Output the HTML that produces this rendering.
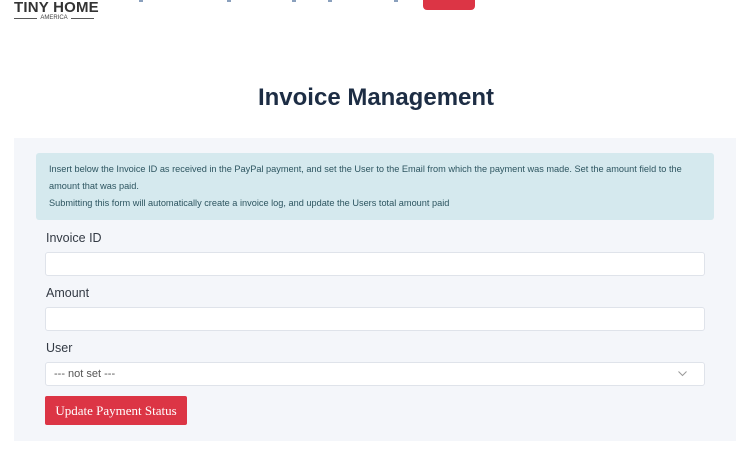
<!DOCTYPE html>
<html><head><style>
*{margin:0;padding:0;box-sizing:border-box}
body{width:752px;height:451px;background:#fff;font-family:"Liberation Sans",sans-serif;position:relative;overflow:hidden}
.a{position:absolute}
.lbl{position:absolute;left:46px;font-size:12.5px;color:#333a44}
.inp{position:absolute;left:45px;width:660px;height:24px;background:#fff;border:1px solid #dfe3ea;border-radius:3px}
</style></head><body>
<div class="a" style="left:14px;top:0;font-size:15px;font-weight:bold;color:#333;line-height:16px;letter-spacing:0.2px">TINY HOME</div>
<div class="a" style="left:14px;top:18px;width:80px;height:1px;background:#555"></div>
<div class="a" style="left:37px;top:14px;width:34px;height:8px;background:#fff;font-size:6px;color:#444;text-align:center;line-height:8px">AMERICA</div>
<div class="a" style="left:139px;top:0;width:4px;height:2px;background:#8aa0bd"></div>
<div class="a" style="left:227px;top:0;width:4px;height:2px;background:#8aa0bd"></div>
<div class="a" style="left:292px;top:0;width:4px;height:2px;background:#8aa0bd"></div>
<div class="a" style="left:328px;top:0;width:4px;height:2px;background:#8aa0bd"></div>
<div class="a" style="left:394px;top:0;width:4px;height:2px;background:#8aa0bd"></div>
<div class="a" style="left:423px;top:-4px;width:52px;height:14px;background:#dc3545;border-radius:4px"></div>
<div class="a" style="left:0;width:752px;top:84px;text-align:center;font-size:24px;font-weight:bold;color:#1d2d44">Invoice Management</div>
<div class="a" style="left:14px;top:138px;width:722px;height:303px;background:#f4f6fa"></div>
<div class="a" style="left:36px;top:153px;width:678px;height:67px;background:#d5e9ee;border-radius:3px;padding:8px 13px;font-size:9.2px;line-height:17px;color:#2d5560">Insert below the Invoice ID as received in the PayPal payment, and set the User to the Email from which the payment was made. Set the amount field to the amount that was paid.<br>Submitting this form will automatically create a invoice log, and update the Users total amount paid</div>
<div class="lbl" style="top:231px">Invoice ID</div>
<div class="inp" style="top:252px"></div>
<div class="lbl" style="top:286px">Amount</div>
<div class="inp" style="top:307px"></div>
<div class="lbl" style="top:341px">User</div>
<div class="inp" style="top:362px;font-size:11px;color:#555;padding:5px 8px">--- not set ---
<svg style="position:absolute;right:17px;top:8px" width="9" height="6" viewBox="0 0 9 6"><path d="M0.5 0.5L4.5 4.5L8.5 0.5" fill="none" stroke="#999" stroke-width="1"/></svg></div>
<div class="a" style="left:45px;top:396px;width:142px;height:29px;background:#dc3545;border-radius:2px;color:#fff;font-family:'Liberation Serif',serif;font-size:13px;text-align:center;line-height:29px">Update Payment Status</div>
</body></html>
